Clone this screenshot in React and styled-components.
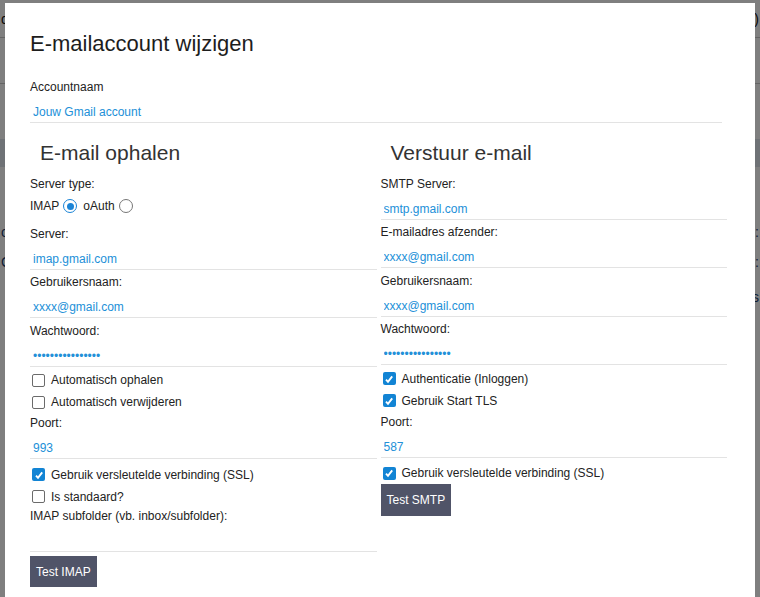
import React from 'react'
import styled, { createGlobalStyle } from 'styled-components'

const GlobalStyle = createGlobalStyle`
    html, body {
        margin: 0;
        padding: 0;
        height: 100%;
        overflow: hidden;
        background: #fff;
        font-family: "Liberation Sans", Arial, Helvetica, sans-serif;
    }
`

// the page that sits behind the dialog, only its edges show
const BgPage = styled.div`
    display: flex;
    flex-direction: column;
    height: 597px;
    font-size: 14px;
    color: #111;
`

const BgRow = styled.div`
    height: ${props => props.h}px;
    flex-shrink: 0;
    border-bottom: ${props => props.line ? '1px solid #c8c8c8' : 'none'};
    background: ${props => props.fill || 'transparent'};
    color: ${props => props.tone || '#111'};
    display: flex;
    align-items: center;
    justify-content: space-between;
    padding: 0 1px;
`

const Overlay = styled.div`
    position: fixed;
    inset: 0;
    background: rgba(0, 0, 0, 0.5);
`

const Modal = styled.div`
    position: fixed;
    left: 5px;
    top: 3px;
    width: 750px;
    height: 640px;
    box-sizing: border-box;
    background: #fff;
    padding: 28px 28px 0 25px;
`

const Title = styled.h2`
    margin: 0;
    font-size: 22px;
    line-height: 26px;
    font-weight: 400;
    color: #1d1d1d;
`

const AccountField = styled.div`
    margin-top: 22px;
    width: calc(100% - 5px);
`

const Columns = styled.div`
    display: grid;
    grid-template-columns: 1fr 1fr;
    column-gap: 4px;
`

const Column = styled.div`
    display: flex;
    flex-direction: column;
`

const Heading = styled.h3`
    margin: 12px 0 10px 10px;
    font-size: 21px;
    line-height: 26px;
    font-weight: 400;
    color: #333;
`

const Label = styled.label`
    display: block;
    font-size: 12px;
    line-height: 16px;
    color: #222;
`

const TextInput = styled.input`
    display: block;
    width: 100%;
    height: 28px;
    box-sizing: border-box;
    margin: 0 0 4.5px;
    padding: 9px 3px 2px;
    border: 0;
    border-bottom: 1px solid #e3e3e3;
    border-radius: 0;
    background: transparent;
    outline: none;
    font-family: "Liberation Sans", Arial, sans-serif;
    font-size: 12px;
    line-height: 16px;
    color: #2290d8;
`

const RadioRow = styled.div`
    display: flex;
    align-items: center;
    height: 29.5px;
    margin-bottom: 4.5px;
    font-size: 12px;
    color: #222;
`

const Radio = styled.span`
    box-sizing: border-box;
    width: 14px;
    height: 14px;
    margin: 0 6px 0 4px;
    border-radius: 50%;
    border: ${props => props.checked ? '1.5px solid #1a84d6' : '1px solid #767676'};
    display: flex;
    align-items: center;
    justify-content: center;
    &::after {
        content: "";
        width: 7px;
        height: 7px;
        border-radius: 50%;
        background: ${props => props.checked ? '#1a84d6' : 'transparent'};
    }
`

const CheckRow = styled.div`
    display: flex;
    align-items: center;
    height: 22px;
    box-sizing: border-box;
    padding-bottom: ${props => props.lift ? 4 : 0}px;
    font-size: 12px;
    color: #222;
`

const Box = styled.span`
    box-sizing: border-box;
    width: 13px;
    height: 13px;
    margin: 0 6px 0 2px;
    border-radius: 2px;
    border: ${props => props.checked ? 'none' : '1px solid #6b6b6b'};
    background: ${props => props.checked ? '#1284d4' : '#fff'};
    display: flex;
    align-items: center;
    justify-content: center;
`

const Button = styled.button`
    display: block;
    align-self: flex-start;
    height: ${props => props.h || 31}px;
    padding: 0 6px;
    border: 0;
    border-radius: 0;
    background: #505468;
    color: #fff;
    font-family: "Liberation Sans", Arial, sans-serif;
    font-size: 12px;
`

function Field({ label, value, type = 'text' }) {
    return (
        <div>
            <Label>{label}</Label>
            <TextInput type={type} defaultValue={value} readOnly />
        </div>
    )
}

function Check({ checked, lift, children }) {
    return (
        <CheckRow lift={lift}>
            <Box checked={checked}>
                {checked && (
                    <svg width="10" height="10" viewBox="0 0 10 10">
                        <polyline points="2,5.6 4,7.8 8.2,2.4" fill="none" stroke="#fff" strokeWidth="1.9" />
                    </svg>
                )}
            </Box>
            {children}
        </CheckRow>
    )
}

const PASS = '1234567890123456'

export default function App() {
    return (
        <>
            <GlobalStyle />
            <BgPage>
                <BgRow h={37} line>d<span>)</span></BgRow>
                <BgRow h={45} line />
                <BgRow h={55} />
                <BgRow h={28} fill="#dfe5ec" />
                <BgRow h={50} />
                <BgRow h={30} tone="#1b3d6b">o<span>:</span></BgRow>
                <BgRow h={30} tone="#1b3d6b">C<span>:</span></BgRow>
                <BgRow h={40} tone="#1b3d6b"><span /><span>s</span></BgRow>
            </BgPage>
            <Overlay />
            <Modal>
                <Title>E-mailaccount wijzigen</Title>
                <AccountField>
                    <Field label="Accountnaam" value="Jouw Gmail account" />
                </AccountField>
                <Columns>
                    <Column>
                        <Heading>E-mail ophalen</Heading>
                        <Label>Server type:</Label>
                        <RadioRow>
                            IMAP <Radio checked /> oAuth <Radio />
                        </RadioRow>
                        <Field label="Server:" value="imap.gmail.com" />
                        <Field label="Gebruikersnaam:" value="xxxx@gmail.com" />
                        <Field label="Wachtwoord:" value={PASS} type="password" />
                        <Check lift>Automatisch ophalen</Check>
                        <Check lift>Automatisch verwijderen</Check>
                        <Field label="Poort:" value="993" />
                        <Check checked>Gebruik versleutelde verbinding (SSL)</Check>
                        <Check>Is standaard?</Check>
                        <Field label="IMAP subfolder (vb. inbox/subfolder):" value="" />
                        <Button>Test IMAP</Button>
                    </Column>
                    <Column>
                        <Heading>Verstuur e-mail</Heading>
                        <Field label="SMTP Server:" value="smtp.gmail.com" />
                        <Field label="E-mailadres afzender:" value="xxxx@gmail.com" />
                        <Field label="Gebruikersnaam:" value="xxxx@gmail.com" />
                        <Field label="Wachtwoord:" value={PASS} type="password" />
                        <Check checked lift>Authenticatie (Inloggen)</Check>
                        <Check checked lift>Gebruik Start TLS</Check>
                        <Field label="Poort:" value="587" />
                        <Check checked>Gebruik versleutelde verbinding (SSL)</Check>
                        <Button h={32}>Test SMTP</Button>
                    </Column>
                </Columns>
            </Modal>
        </>
    )
}
